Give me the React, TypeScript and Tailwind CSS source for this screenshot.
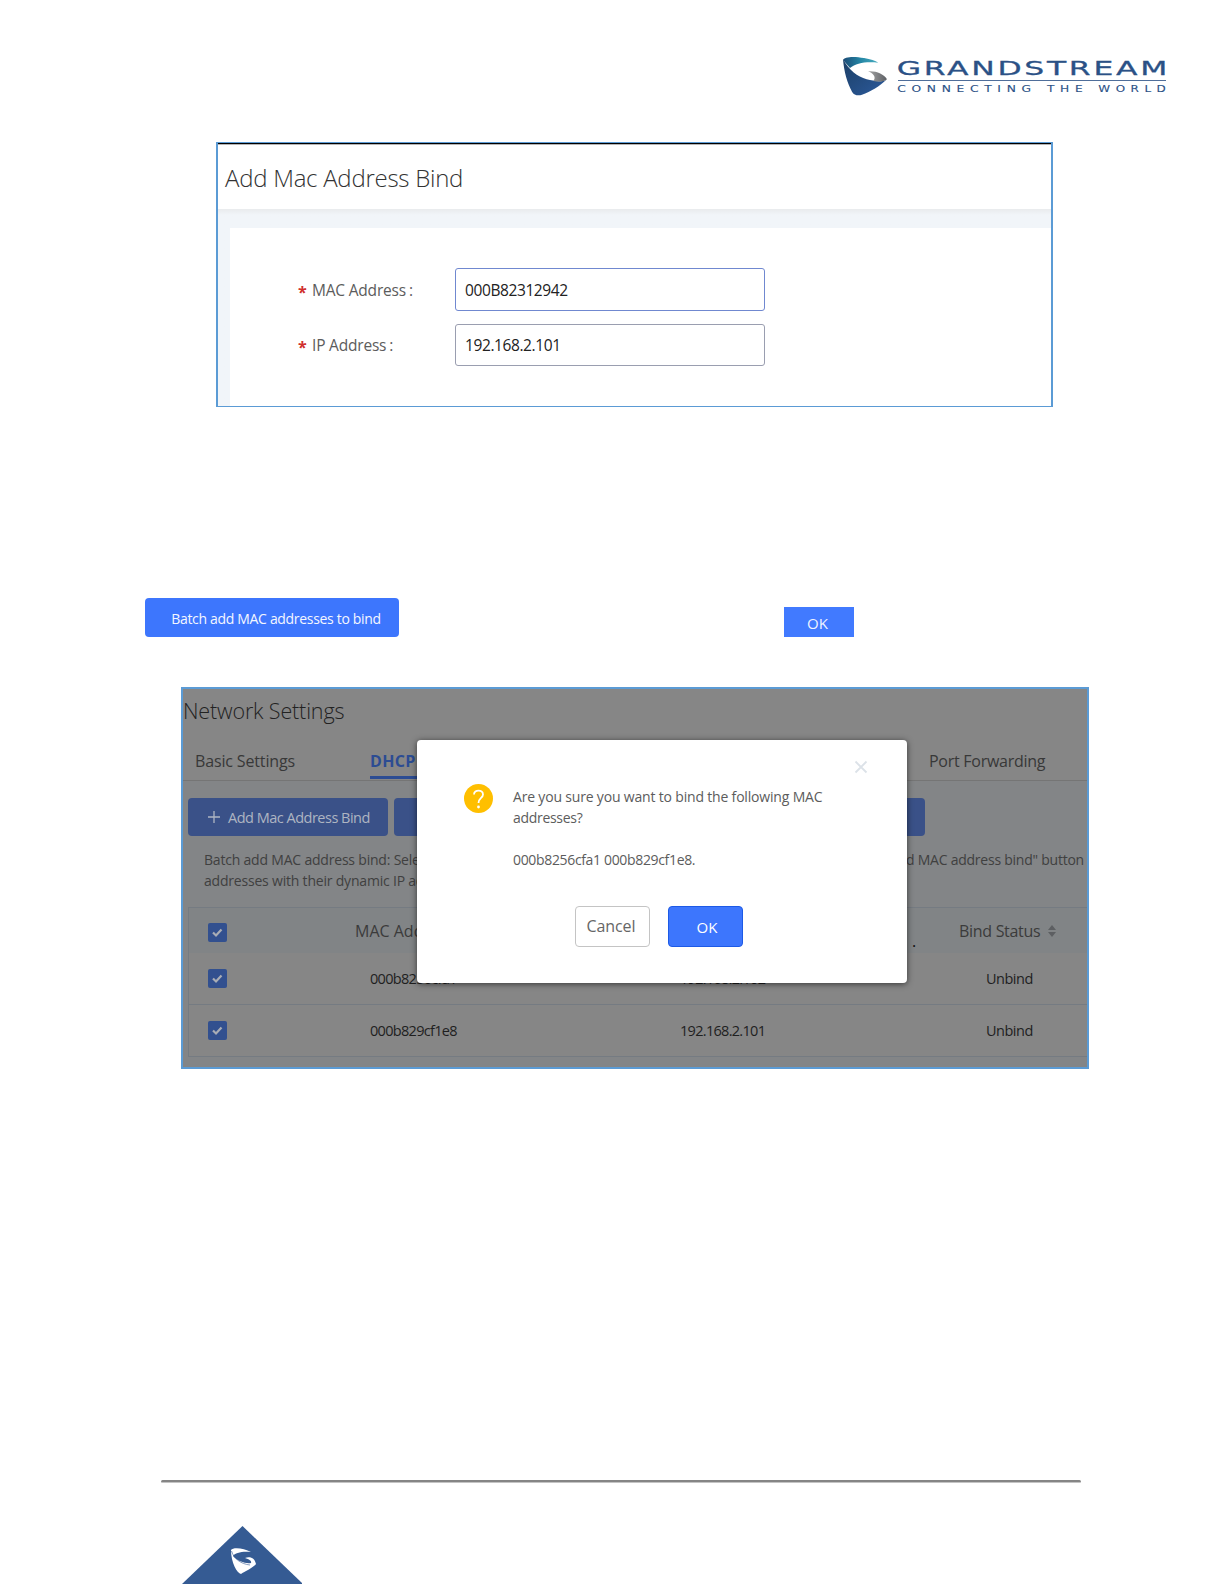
import React from "react";

function Logo() {
  return (
    <svg className="ml-[820px] block h-[70px] w-[360px]" viewBox="0 0 1080 210">
      <defs>
        <linearGradient id="teal" x1="0" y1="0" x2="1" y2="0">
          <stop offset="0" stopColor="#1c4a75" />
          <stop offset="0.5" stopColor="#2486a5" />
          <stop offset="1" stopColor="#49adc0" />
        </linearGradient>
        <linearGradient id="navy" x1="0" y1="0" x2="1" y2="1">
          <stop offset="0" stopColor="#1c3f66" />
          <stop offset="1" stopColor="#2c5a9c" />
        </linearGradient>
        <linearGradient id="steel" x1="0" y1="0" x2="1" y2="0">
          <stop offset="0" stopColor="#a5a5a5" />
          <stop offset="1" stopColor="#5c5f63" />
        </linearGradient>
      </defs>
      <path d="M69 60C72 50 102 48 132 54C152 58 166 62 175 68C140 64 108 68 90 84Z" fill="url(#teal)" />
      <path d="M69 58C72 95 82 130 96 155C102 166 115 168 126 164C152 154 180 138 199 119C184 126 164 124 140 118C112 110 88 92 69 58Z" fill="url(#navy)" />
      <path d="M144 94C168 92 192 102 201 118C192 126 176 126 160 123C170 112 160 100 144 94Z" fill="url(#steel)" />
      <g fill="#2b5186" stroke="#2b5186" fontFamily="DejaVu Sans">
        <text x="230" y="105" fontSize="58" strokeWidth="0.8" textLength="820" letterSpacing="5" lengthAdjust="spacingAndGlyphs">GRANDSTREAM</text>
        <path d="M234 121.500H1038" strokeWidth="2.500" />
        <g fontSize="26" strokeWidth="0.300">
          <text x="232" y="157" textLength="418" letterSpacing="12" lengthAdjust="spacingAndGlyphs">CONNECTING</text>
          <text x="681" y="157" textLength="124" letterSpacing="12" lengthAdjust="spacingAndGlyphs">THE</text>
          <text x="835" y="157" textLength="219" letterSpacing="12" lengthAdjust="spacingAndGlyphs">WORLD</text>
        </g>
      </g>
    </svg>
  );
}

function Field({ label, value, active }: { label: string; value: string; active?: boolean }) {
  return (
    <div className="flex h-[42.5px] items-center">
      <div className="flex w-[157px] items-center pt-[2px]">
        <span className="w-[14px] pt-[3px] text-[16px] leading-none font-bold text-[#d0302c]">*</span>
        <span className="text-[15.5px] tracking-[-0.2px] whitespace-nowrap text-[#5c5c5c]">{label}<span className="ml-[3px]">:</span></span>
      </div>
      <div className={`flex h-full w-[310px] items-center rounded-[3px] border-[1.5px] pt-[2px] pl-[9px] text-[15.5px] tracking-[-0.4px] text-[#222] ${active ? "border-[#7088d0]" : "border-[#9a9eb0]"}`}>
        {value}
      </div>
    </div>
  );
}

function Check() {
  return (
    <span className="ml-[19px] flex size-[19px] items-center justify-center rounded-[2px] bg-[#32508f]">
      <svg viewBox="0 0 19 19" className="size-[19px]">
        <path d="M5 9.500L8 12.500L13.500 6.500" fill="none" stroke="#a9adb5" strokeWidth="2.200" />
      </svg>
    </span>
  );
}

function Row({ mac, ip }: { mac: string; ip: string }) {
  return (
    <div className="flex h-[52px] items-center border-b border-[#757b82] bg-[#868686] text-[14.5px] tracking-[-0.7px] text-[#1f1f1f]">
      <div className="w-[181px]"><Check /></div>
      <div className="w-[310px]">{mac}</div>
      <div className="w-[306px]">{ip}</div>
      <div className="tracking-[-0.5px]">Unbind</div>
    </div>
  );
}

function Dialog() {
  return (
    <div className="absolute top-[51px] left-[234px] h-[243px] w-[490px] rounded-[4px] bg-white shadow-[0_1px_6px_rgba(0,0,0,0.6)]">
      <svg viewBox="0 0 14 14" className="absolute top-[20px] left-[437px] size-[14px]">
        <path d="M1.500 1.500L12.500 12.500M12.500 1.500L1.500 12.500" stroke="#dce2e8" strokeWidth="1.800" />
      </svg>
      <div className="flex pt-[44px] pl-[47px]">
        <svg viewBox="0 0 29 29" className="size-[29px]">
          <circle cx="14.500" cy="14.500" r="14.500" fill="#ffbf00" />
          <path d="M10 10.500C10 5.200 19 5.200 19 10.500C19 14 14.500 14 14.500 19" fill="none" stroke="#fff" strokeWidth="1.800" />
          <circle cx="14.500" cy="23" r="1.400" fill="#fff" />
        </svg>
        <div className="ml-[20px] pt-[2px] text-[14px] leading-[21.2px] text-[#5c5c5c]">
          <p className="tracking-[-0.18px] whitespace-nowrap">Are you sure you want to bind the following MAC</p>
          <p className="tracking-[-0.3px]">addresses?</p>
          <p className="mt-[21px] tracking-[-0.34px]">000b8256cfa1 000b829cf1e8.</p>
        </div>
      </div>
      <div className="mt-[35px] ml-[158px] flex gap-[18px]">
        <button className="h-[41px] w-[75px] rounded-[4px] border border-[#c4c4c4] pr-[3px] pb-px text-[16px] tracking-[-0.1px] text-[#666]">Cancel</button>
        <button className="h-[41px] w-[75px] rounded-[4px] border border-[#1d5ae6] bg-[#3d76fd] pt-[2px] pl-[3px] text-[15px] font-medium text-white">OK</button>
      </div>
    </div>
  );
}

export default function App() {
  return (
    <div className="h-[1584px] w-[1224px] overflow-hidden bg-white pt-[40px] font-['Open_Sans',sans-serif]">
      <Logo />

      <section className="mt-[32px] ml-[216px] flex h-[265px] w-[837px] flex-col border-x-2 border-y border-[#5b9bd5]">
        <div className="h-[2px] border-b border-[#b4b4b4] bg-black" />
        <h1 className="h-[64px] pt-[16px] pl-[7px] text-[24px] leading-[34px] font-light tracking-[-0.26px] text-[#333]">Add Mac Address Bind</h1>
        <div className="flex-1 bg-[#f1f5f9] bg-linear-to-b from-[#e9ebed] to-[#f1f5f9] to-[6px] pt-[19px] pl-[12px]">
          <div className="flex h-full flex-col gap-[13px] bg-white pt-[40px] pl-[68px]">
            <Field label="MAC Address" value="000B82312942" active />
            <Field label="IP Address" value="192.168.2.101" />
          </div>
        </div>
      </section>

      <div className="mt-[191px] ml-[145px] flex">
        <button className="h-[39px] w-[254px] rounded-[4px] bg-[#3d76fd] pt-px pl-[8px] text-[14px] tracking-[-0.32px] whitespace-nowrap text-[#f4f6ff]">Batch add MAC addresses to bind</button>
        <button className="mt-[9px] ml-[385px] h-[30px] w-[70px] bg-[#417aff] pt-[2px] pr-[3px] text-[15px] text-[#eef2ff]">OK</button>
      </div>

      <section className="relative mt-[50px] ml-[181px] h-[382px] w-[908px] overflow-hidden border-2 border-[#5b9bd5] bg-[#838587]">
        <div className="h-[92px] border-b border-[#757575] bg-[#868686]">
          <h2 className="h-[57px] pt-[6px] text-[21.5px] leading-[32px] font-light tracking-[-0.15px] text-[#222]">Network Settings</h2>
          <div className="flex h-[34px] pl-[12px] text-[16px] leading-[31px] text-[#383838]">
            <div className="w-[175px] tracking-[-0.15px]">Basic Settings</div>
            <div className="h-[33px] w-[559px]"><span className="block h-[33px] w-[90px] border-b-3 border-[#2c4c93] font-bold tracking-[0.3px] text-[#2c4c93]">DHCP</span></div>
            <div className="tracking-[-0.27px]">Port Forwarding</div>
          </div>
        </div>
        <div className="mt-[17px] ml-[5px] flex gap-[6px]">
          <div className="flex h-[38px] w-[200px] items-center rounded-[4px] bg-[#3a5188] pl-[20px] text-[14.5px] text-[#aeb5c2]">
            <svg viewBox="0 0 12 12" className="mr-[8px] size-[12px]"><path d="M6 0V12M0 6H12" stroke="#aeb5c2" strokeWidth="1.300" /></svg>
            <span className="pt-px tracking-[-0.5px] whitespace-nowrap">Add Mac Address Bind</span>
          </div>
          <div className="h-[38px] w-[531px] rounded-[4px] bg-[#3a5188]" />
        </div>
        <div className="mt-[13px] ml-[21px] flex h-[58px] text-[14px] leading-[21.200px] whitespace-nowrap text-[#404040]">
          <div className="w-[702px] tracking-[-0.2px]">
            <p>Batch add MAC address bind: Selec</p>
            <p>addresses with their dynamic IP add</p>
          </div>
          <p className="tracking-[-0.24px]">d MAC address bind" button</p>
        </div>
        <div className="ml-[5px] border-t border-l border-[#757b82]">
          <div className="flex h-[45px] items-center bg-[#818486] text-[16px] text-[#3b3b3b]">
            <div className="w-[166px] pt-[4px]"><Check /></div>
            <div className="w-[557px]">MAC Add</div>
            <div className="w-[47px] pt-[20px] text-[#111]">.</div>
            <div className="tracking-[-0.3px] whitespace-nowrap">Bind Status</div>
            <svg viewBox="0 0 8 12" className="ml-[8px] h-[12px] w-[8px]"><path d="M4 0L8 5H0ZM4 12L0 7H8Z" fill="#5d5f62" /></svg>
          </div>
          <Row mac="000b8256cfa1" ip="192.168.2.102" />
          <Row mac="000b829cf1e8" ip="192.168.2.101" />
        </div>
        <Dialog />
      </section>

      <footer className="mt-[411px] ml-[161px] w-[920px]">
        <div className="h-[3px] rounded-full border-b border-[#c4c4c4] bg-[#858585]" />
        <svg viewBox="0 0 120 58" className="mt-[43px] ml-[21px] block h-[58px] w-[120px]">
          <path d="M60.500 0L121 58H0Z" fill="#355b93" />
          <path d="M49 24C51 21 62 22 69 26C60 25 53 27 51 30C55 35 64 38 69 37C70 35 67 33 63 32C69 30 73 33 74 38C72 41 62 46 59 48C55 47 49 37 49 24Z" fill="#fff" />
          <path d="M49.500 25C52 33 59 38 68 39" fill="none" stroke="#355b93" strokeWidth="0.600" />
        </svg>
      </footer>
    </div>
  );
}
